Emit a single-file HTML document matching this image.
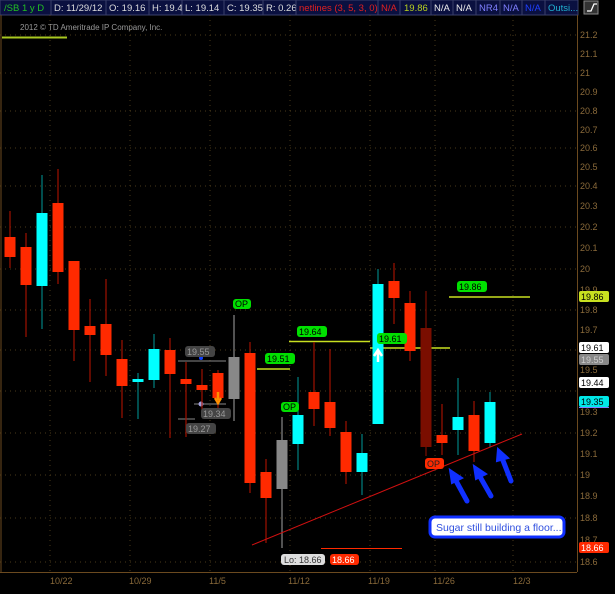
<!DOCTYPE html>
<html><head><meta charset="utf-8"><style>
body{margin:0;background:#000;width:615px;height:589px;overflow:hidden;font-family:"Liberation Sans",sans-serif}
</style></head><body>
<svg width="615" height="589" xmlns="http://www.w3.org/2000/svg" font-family="Liberation Sans, sans-serif">
<rect width="615" height="589" fill="#000"/>
<g font-size="9.5">
<rect x="0" y="0" width="51" height="15" fill="#0a1040" stroke="#3a3f6a"/><text x="4" y="11" fill="#22c022">/SB 1 y D</text>
<rect x="51" y="0" width="55" height="15" fill="#0a1040" stroke="#3a3f6a"/><text x="54" y="11" fill="#ddd">D: 11/29/12</text>
<rect x="106" y="0" width="43" height="15" fill="#0a1040" stroke="#3a3f6a"/><text x="109" y="11" fill="#ddd">O: 19.16</text>
<rect x="149" y="0" width="33" height="15" fill="#0a1040" stroke="#3a3f6a"/><text x="152" y="11" fill="#ddd">H: 19.4</text>
<rect x="182" y="0" width="42" height="15" fill="#0a1040" stroke="#3a3f6a"/><text x="185" y="11" fill="#ddd">L: 19.14</text>
<rect x="224" y="0" width="39" height="15" fill="#0a1040" stroke="#3a3f6a"/><text x="227" y="11" fill="#ddd">C: 19.35</text>
<rect x="263" y="0" width="33" height="15" fill="#0a1040" stroke="#3a3f6a"/><text x="266" y="11" fill="#ddd">R: 0.26</text>
<rect x="296" y="0" width="82" height="15" fill="#0a1040" stroke="#3a3f6a"/><text x="299" y="11" fill="#e02020">netlines (3, 5, 3, 0)</text>
<rect x="378" y="0" width="22" height="15" fill="#0a1040" stroke="#3a3f6a"/><text x="381" y="11" fill="#e02020">N/A</text>
<rect x="400" y="0" width="31" height="15" fill="#0a1040" stroke="#3a3f6a"/><text x="404" y="11" fill="#b8d020">19.86</text>
<rect x="431" y="0" width="22" height="15" fill="#0a1040" stroke="#3a3f6a"/><text x="434" y="11" fill="#eee">N/A</text>
<rect x="453" y="0" width="23" height="15" fill="#0a1040" stroke="#3a3f6a"/><text x="456" y="11" fill="#eee">N/A</text>
<rect x="476" y="0" width="24" height="15" fill="#0a1040" stroke="#3a3f6a"/><text x="479" y="11" fill="#8080ff">NR4</text>
<rect x="500" y="0" width="22" height="15" fill="#0a1040" stroke="#3a3f6a"/><text x="503" y="11" fill="#8080ff">N/A</text>
<rect x="522" y="0" width="23" height="15" fill="#0a1040" stroke="#3a3f6a"/><text x="525" y="11" fill="#2040ff">N/A</text>
<rect x="545" y="0" width="33" height="15" fill="#0a1040" stroke="#3a3f6a"/><text x="548" y="11" fill="#20b0d0">Outsi...</text>
</g>
<rect x="584" y="1" width="14" height="13" fill="#333" stroke="#888"/>
<path d="M587 11 L591 11 L594 4 L597 4" stroke="#fff" fill="none" stroke-width="1.3"/>
<text x="20" y="30" font-size="8" fill="#999">2012 © TD Ameritrade IP Company, Inc.</text>
<g stroke="#4a3a1a" stroke-dasharray="1,4" stroke-width="1">
<line x1="50" y1="15" x2="50" y2="572"/><line x1="130" y1="15" x2="130" y2="572"/><line x1="210" y1="15" x2="210" y2="572"/><line x1="290" y1="15" x2="290" y2="572"/><line x1="370" y1="15" x2="370" y2="572"/><line x1="435" y1="15" x2="435" y2="572"/><line x1="513" y1="15" x2="513" y2="572"/>
</g>
<g stroke="#4a3a1a" stroke-dasharray="1,4">
<line x1="0" y1="35" x2="577" y2="35"/><line x1="0" y1="73" x2="577" y2="73"/><line x1="0" y1="111" x2="577" y2="111"/><line x1="0" y1="148" x2="577" y2="148"/><line x1="0" y1="186" x2="577" y2="186"/><line x1="0" y1="227" x2="577" y2="227"/><line x1="0" y1="269" x2="577" y2="269"/><line x1="0" y1="310" x2="577" y2="310"/><line x1="0" y1="350" x2="577" y2="350"/><line x1="0" y1="391" x2="577" y2="391"/><line x1="0" y1="433" x2="577" y2="433"/><line x1="0" y1="475" x2="577" y2="475"/><line x1="0" y1="518" x2="577" y2="518"/><line x1="0" y1="562" x2="577" y2="562"/>
</g>
<line x1="577.5" y1="15" x2="577.5" y2="572" stroke="#6b4a1f"/>
<line x1="0" y1="572.5" x2="577" y2="572.5" stroke="#6b4a1f"/>
<line x1="1" y1="15" x2="1" y2="572" stroke="#6b4a1f"/>
<g font-size="9" fill="#8a6a3a">
<text x="580" y="38">21.2</text><text x="580" y="57">21.1</text><text x="580" y="76">21</text><text x="580" y="95">20.9</text><text x="580" y="114">20.8</text><text x="580" y="133">20.7</text><text x="580" y="151">20.6</text><text x="580" y="170">20.5</text><text x="580" y="189">20.4</text><text x="580" y="209">20.3</text><text x="580" y="230">20.2</text><text x="580" y="251">20.1</text><text x="580" y="272">20</text><text x="580" y="293">19.9</text><text x="580" y="313">19.8</text><text x="580" y="333">19.7</text><text x="580" y="373">19.5</text><text x="580" y="415">19.3</text><text x="580" y="436">19.2</text><text x="580" y="457">19.1</text><text x="580" y="478">19</text><text x="580" y="499">18.9</text><text x="580" y="521">18.8</text><text x="580" y="543">18.7</text><text x="580" y="565">18.6</text>
</g>
<g font-size="9" fill="#8a6a3a">
<text x="50" y="584">10/22</text><text x="129" y="584">10/29</text><text x="209" y="584">11/5</text><text x="288" y="584">11/12</text><text x="368" y="584">11/19</text><text x="433" y="584">11/26</text><text x="513" y="584">12/3</text>
</g>
<g font-size="9">
<rect x="579" y="291" width="30" height="11" rx="2" fill="#c8e020"/><text x="581" y="300" fill="#000">19.86</text>
<rect x="579" y="342" width="30" height="11" rx="2" fill="#fff"/><text x="581" y="351" fill="#000">19.61</text>
<rect x="579" y="354" width="30" height="11" rx="2" fill="#888"/><text x="581" y="363" fill="#ccc">19.55</text>
<rect x="579" y="377" width="30" height="11" rx="2" fill="#fff"/><text x="581" y="386" fill="#000">19.44</text>
<rect x="579" y="396" width="30" height="11" rx="2" fill="#00e8e8"/><text x="581" y="405" fill="#000">19.35</text>
<line x1="579" y1="407.5" x2="609" y2="407.5" stroke="#8080ff"/>
<rect x="579" y="542" width="30" height="11" rx="2" fill="#ff2a00"/><text x="581" y="551" fill="#fff">18.66</text>
</g>
<line x1="2" y1="37.5" x2="67" y2="37.5" stroke="#a8c820" stroke-width="2"/>
<line x1="449" y1="297" x2="530" y2="297" stroke="#c8e020" stroke-width="1.5"/>
<line x1="289" y1="341.5" x2="370" y2="341.5" stroke="#c8e020" stroke-width="1.5"/>
<line x1="257" y1="369" x2="290" y2="369" stroke="#c8e020" stroke-width="1.5"/>
<line x1="370" y1="348" x2="450" y2="348" stroke="#c8e020" stroke-width="1.5"/>
<line x1="321" y1="548.5" x2="402" y2="548.5" stroke="#ff2a00"/>
<line x1="178" y1="361" x2="226" y2="361" stroke="#888"/>
<line x1="194" y1="404" x2="226" y2="404" stroke="#888"/>
<line x1="178" y1="419" x2="195" y2="419" stroke="#888"/>
<circle cx="201" cy="358" r="2" fill="#1040ff"/>
<circle cx="201" cy="404" r="2.5" fill="#a0a0e0"/>
<g id="c"></g>
<line x1="252" y1="545" x2="522" y2="434" stroke="#d01010"/>
<g font-size="9">
<rect x="233" y="299" width="18" height="10" rx="3" fill="#00e000"/><text x="235" y="307" fill="#000">OP</text>
<rect x="281" y="402" width="18" height="10" rx="3" fill="#00e000"/><text x="283" y="410" fill="#000">OP</text>
<rect x="297" y="326" width="30" height="11" rx="3" fill="#00e000"/><text x="299" y="335" fill="#000">19.64</text>
<rect x="265" y="353" width="30" height="11" rx="3" fill="#00e000"/><text x="267" y="362" fill="#000">19.51</text>
<rect x="377" y="333" width="30" height="11" rx="3" fill="#00e000"/><text x="379" y="342" fill="#000">19.61</text>
<rect x="457" y="281" width="30" height="11" rx="3" fill="#00e000"/><text x="459" y="290" fill="#000">19.86</text>
<rect x="185" y="346" width="30" height="11" rx="3" fill="#444"/><text x="187" y="355" fill="#999">19.55</text>
<rect x="201" y="408" width="30" height="11" rx="3" fill="#444"/><text x="203" y="417" fill="#999">19.34</text>
<rect x="186" y="423" width="30" height="11" rx="3" fill="#444"/><text x="188" y="432" fill="#999">19.27</text>
<rect x="281" y="554" width="44" height="11" rx="3" fill="#ddd"/><text x="284" y="563" fill="#333">Lo: 18.66</text>
<rect x="330" y="554" width="29" height="11" rx="3" fill="#ff2a00"/><text x="332" y="563" fill="#fff">18.66</text>
<rect x="425" y="458" width="19" height="11" rx="3" fill="#ff2a00"/><text x="427" y="467" fill="#222">OP</text>
</g>
<path d="M378 362 L378 352 M374 356 L378 350 L382 356" stroke="#fff" stroke-width="2.5" fill="none"/>
<path d="M218 392 L218 400 M215 398 L218 403 L221 398" stroke="#ff9000" stroke-width="2.5" fill="none"/>
<g stroke="#1030ff" stroke-width="5" fill="#1030ff" stroke-linecap="round">
<line x1="467" y1="501" x2="455" y2="479"/><path d="M450 470 L462 478 L452 483 Z" stroke-width="2"/>
<line x1="491" y1="496" x2="479" y2="475"/><path d="M474 466 L486 474 L476 479 Z" stroke-width="2"/>
<line x1="511" y1="481" x2="502" y2="458"/><path d="M498 449 L508 458 L497 461 Z" stroke-width="2"/>
</g>
<rect x="430" y="517" width="134" height="20" rx="5" fill="#fff" stroke="#1030ff" stroke-width="3"/>
<text x="436" y="531" font-size="10.5" fill="#3050e0">Sugar still building a floor...</text>
</svg>
<script>
var d=[[10,211,268,237,257,'r'],[26,233,337,247,285,'r'],[42,175,329,213,286,'c'],[58,169,284,203,272,'r'],[74,261,361,261,330,'r'],[90,299,382,326,335,'r'],[106,279,376,324,355,'r'],[122,340,418,359,386,'r'],[138,373,419,379,382,'c'],[154,334,388,349,380,'c'],[170,338,438,350,374,'r'],[186,362,437,379,384,'r'],[202,369,410,385,390,'r'],[218,370,410,373,398,'r'],[234,315,421,357,399,'g'],[250,342,493,353,483,'r'],[266,459,543,472,498,'r'],[282,417,548,440,489,'g'],[298,377,470,415,444,'c'],[314,342,426,392,409,'r'],[330,349,436,402,428,'r'],[346,421,484,432,472,'r'],[362,434,495,453,472,'c'],[378,269,424,284,424,'c'],[394,263,324,281,298,'r'],[410,291,361,303,351,'r'],[426,291,456,328,447,'d'],[442,404,455,435,443,'r'],[458,378,455,417,430,'c'],[474,401,462,415,451,'r'],[490,392,447,402,443,'c']];
var col={r:['#ff2a00','#a01000'],c:['#00ffff','#008080'],g:['#888','#888'],d:['#7a0e00','#7a0e00']};
var s='';d.forEach(function(a){var c=col[a[5]];s+='<line x1="'+a[0]+'" y1="'+a[1]+'" x2="'+a[0]+'" y2="'+a[2]+'" stroke="'+c[1]+'" stroke-width="1.2"/><rect x="'+(a[0]-5.5)+'" y="'+a[3]+'" width="11" height="'+Math.max(3,a[4]-a[3])+'" fill="'+c[0]+'"/>';});
document.getElementById('c').innerHTML=s;
</script>
</body></html>
